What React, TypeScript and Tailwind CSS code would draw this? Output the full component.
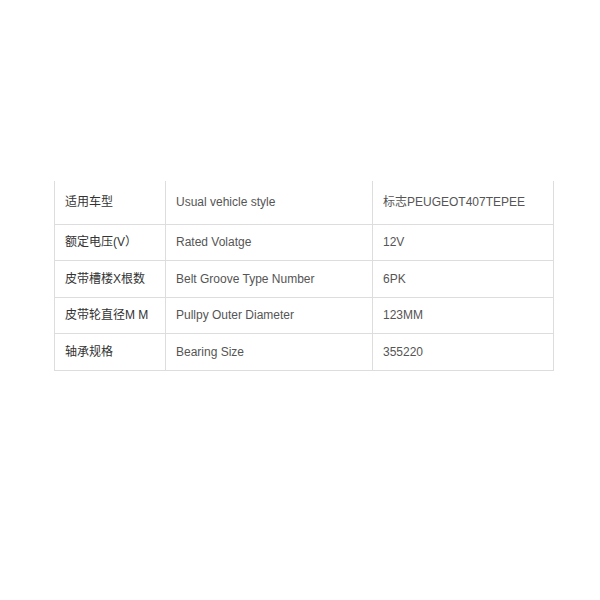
const rows = [
  { cn: "适用车型", en: "Usual vehicle style", value: "标志PEUGEOT407TEPEE", h: "h-[43px]" },
  { cn: "额定电压(V）", en: "Rated Volatge", value: "12V", h: "h-[36px]" },
  { cn: "皮带槽楼X根数", en: "Belt Groove Type Number", value: "6PK", h: "h-[37px]" },
  { cn: "皮带轮直径M M", en: "Pullpy Outer Diameter", value: "123MM", h: "h-[36px]" },
  { cn: "轴承规格", en: "Bearing Size", value: "355220", h: "h-[37px]" },
];

export default function App() {
  return (
    <div className="w-[600px] h-[600px] bg-white pt-[181px] pl-[54px] font-['Liberation_Sans','Noto_Sans_CJK_SC',sans-serif]">
      <table className="w-[499px] border-collapse text-[12px] table-fixed">
        <colgroup>
          <col className="w-[111px]" />
          <col className="w-[207px]" />
          <col className="w-[181px]" />
        </colgroup>
        <tbody>
          {rows.map((r, i) => (
            <tr key={i} className={r.h}>
              <td className="border-x border-b border-[#dddddd] px-[10px] text-[#333333]">{r.cn}</td>
              <td className="border-x border-b border-[#dddddd] px-[10px] text-[#555555]">{r.en}</td>
              <td className="border-x border-b border-[#dddddd] px-[10px] text-[#555555]">{r.value}</td>
            </tr>
          ))}
        </tbody>
      </table>
    </div>
  );
}
